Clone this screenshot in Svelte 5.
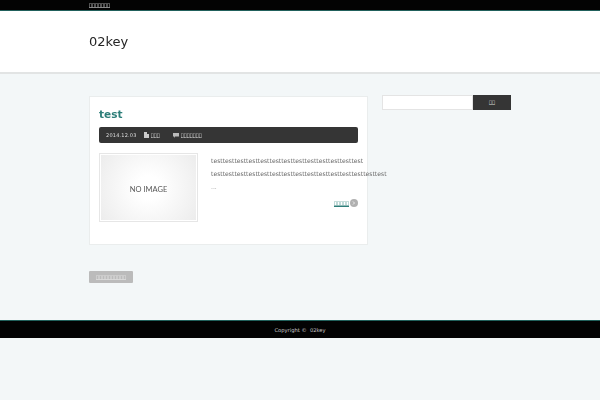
<script>
  const tofu = (n) => "\u{2FFFE}".repeat(n);
  const line1 = "test".repeat(13);
  const line2 = "test".repeat(15);
</script>

<div class="page">
  <div class="topbar">
    <div class="wrap"><span class="tiny">{tofu(7)}</span></div>
  </div>

  <header>
    <div class="wrap"><h1>02key</h1></div>
  </header>

  <div class="wrap content">
    <main>
      <article>
        <h2>test</h2>
        <div class="meta">
          <span class="date">2014.12.03</span>
          <span class="cat">
            <svg width="5" height="6" viewBox="0 0 5 6"><path d="M0 0h3v6H0zM3 2h2v4H3z" fill="#ccc" /></svg>
            <span class="tiny">{tofu(3)}</span>
          </span>
          <span class="comment">
            <svg width="6" height="5" viewBox="0 0 6 5"><path d="M0 0h6v3.5H2L1 5V3.5H0z" fill="#bbb" /></svg>
            <span class="tiny">{tofu(7)}</span>
          </span>
        </div>
        <div class="entry">
          <div class="thumb"><div class="noimage">NO IMAGE</div></div>
          <div class="body">
            <p>{line1}</p>
            <p>{line2}</p>
            <p class="dots">...</p>
            <div class="more">
              <a href="#more" class="tiny">{tofu(5)}</a>
              <svg width="8" height="8" viewBox="0 0 8 8">
                <circle cx="4" cy="4" r="4" fill="#b0b0b0" />
                <path d="M3 2.5L4.5 4 3 5.5" fill="none" stroke="#eee" />
              </svg>
            </div>
          </div>
        </div>
      </article>
      <button class="pager"><span class="tiny">{tofu(10)}</span></button>
    </main>

    <aside>
      <input type="text" aria-label="search" />
      <button class="go"><span class="tiny">{tofu(2)}</span></button>
    </aside>
  </div>

  <footer>
    <div>Copyright ©&nbsp; 02key</div>
  </footer>
</div>

<style>
  :global(body) {
    font-family: "DejaVu Sans", sans-serif;
    background: #f3f7f8;
    margin: 0;
  }

  .page {
    height: 400px;
    overflow: hidden;
    display: flex;
    flex-direction: column;
    opacity: 0.99;
  }

  .wrap {
    width: 422px;
    margin-left: 89px;
  }

  .tiny {
    display: block;
    font-size: 5px;
    height: 5px;
    line-height: 5px;
  }

  .topbar {
    height: 11px;
    box-sizing: border-box;
    background: #000;
    border-bottom: 1px solid #1f5f5a;
    color: #eee;
    display: flex;
    align-items: center;
    flex: none;
  }

  header {
    height: 63px;
    box-sizing: border-box;
    background: #fff;
    border-bottom: 2px solid #e2e4e4;
    flex: none;
    display: flex;
    align-items: center;
  }

  h1 {
    font-size: 13px;
    font-weight: 400;
    color: #222;
    margin: 0;
  }

  .content {
    display: flex;
    gap: 14px;
    flex: none;
    height: 246px;
    padding-top: 22px;
    box-sizing: border-box;
  }

  main {
    width: 279px;
    flex: none;
  }

  article {
    height: 149px;
    box-sizing: border-box;
    background: #fff;
    border: 1px solid #eaeded;
    padding: 9px 9px 0;
  }

  h2 {
    font-size: 10.5px;
    line-height: 17px;
    font-weight: 700;
    color: #2b7d78;
    margin: 0 0 4px;
  }

  .meta {
    height: 16px;
    background: #333;
    border-radius: 2px;
    color: #ddd;
    display: flex;
    align-items: center;
    padding-left: 7px;
    font-size: 5px;
  }

  .date {
    letter-spacing: 0.2px;
    margin-right: 7px;
  }

  .cat, .comment {
    display: flex;
    align-items: center;
    gap: 2px;
  }

  .cat {
    margin-right: 13px;
  }

  .entry {
    display: flex;
    gap: 13px;
    margin-top: 10px;
  }

  .thumb {
    width: 99px;
    height: 69px;
    box-sizing: border-box;
    border: 1px solid #e6e6e6;
    padding: 1px;
    flex: none;
  }

  .noimage {
    height: 100%;
    padding-top: 3px;
    box-sizing: border-box;
    background: radial-gradient(circle, #fff 20%, #ececec 100%);
    display: flex;
    align-items: center;
    justify-content: center;
    font-family: "Lato", sans-serif;
    font-size: 7.5px;
    color: #555;
  }

  .body {
    width: 147px;
    font-size: 6.1px;
    color: #666;
    padding-top: 1px;
  }

  .body p {
    margin: 0;
    line-height: 13px;
    white-space: nowrap;
  }

  .body .dots {
    color: #999;
  }

  .more {
    display: flex;
    justify-content: flex-end;
    align-items: center;
    gap: 1px;
    margin-top: 6px;
  }

  .more a {
    color: #2b7d78;
    text-decoration: underline;
  }

  .pager {
    display: block;
    width: 44px;
    height: 12px;
    margin-top: 26px;
    padding: 0;
    border: 0;
    border-radius: 1px;
    background: #bbb;
    color: #eee;
    font-family: inherit;
  }

  aside {
    display: flex;
    width: 129px;
    height: 15px;
    margin-top: -1px;
  }

  input {
    width: 91px;
    height: 15px;
    box-sizing: border-box;
    background: #fff;
    border: 1px solid #e4e4e4;
    padding: 0;
    flex: none;
  }

  .go {
    width: 38px;
    height: 15px;
    border: 0;
    padding: 0;
    background: #333;
    color: #ddd;
    font-family: inherit;
    flex: none;
  }

  footer {
    height: 18px;
    flex: none;
    background: #000;
    border-top: 1px solid #1f5f5a;
    box-sizing: border-box;
    color: #ccc;
    font-size: 5.2px;
    display: flex;
    align-items: center;
    justify-content: center;
  }
</style>
